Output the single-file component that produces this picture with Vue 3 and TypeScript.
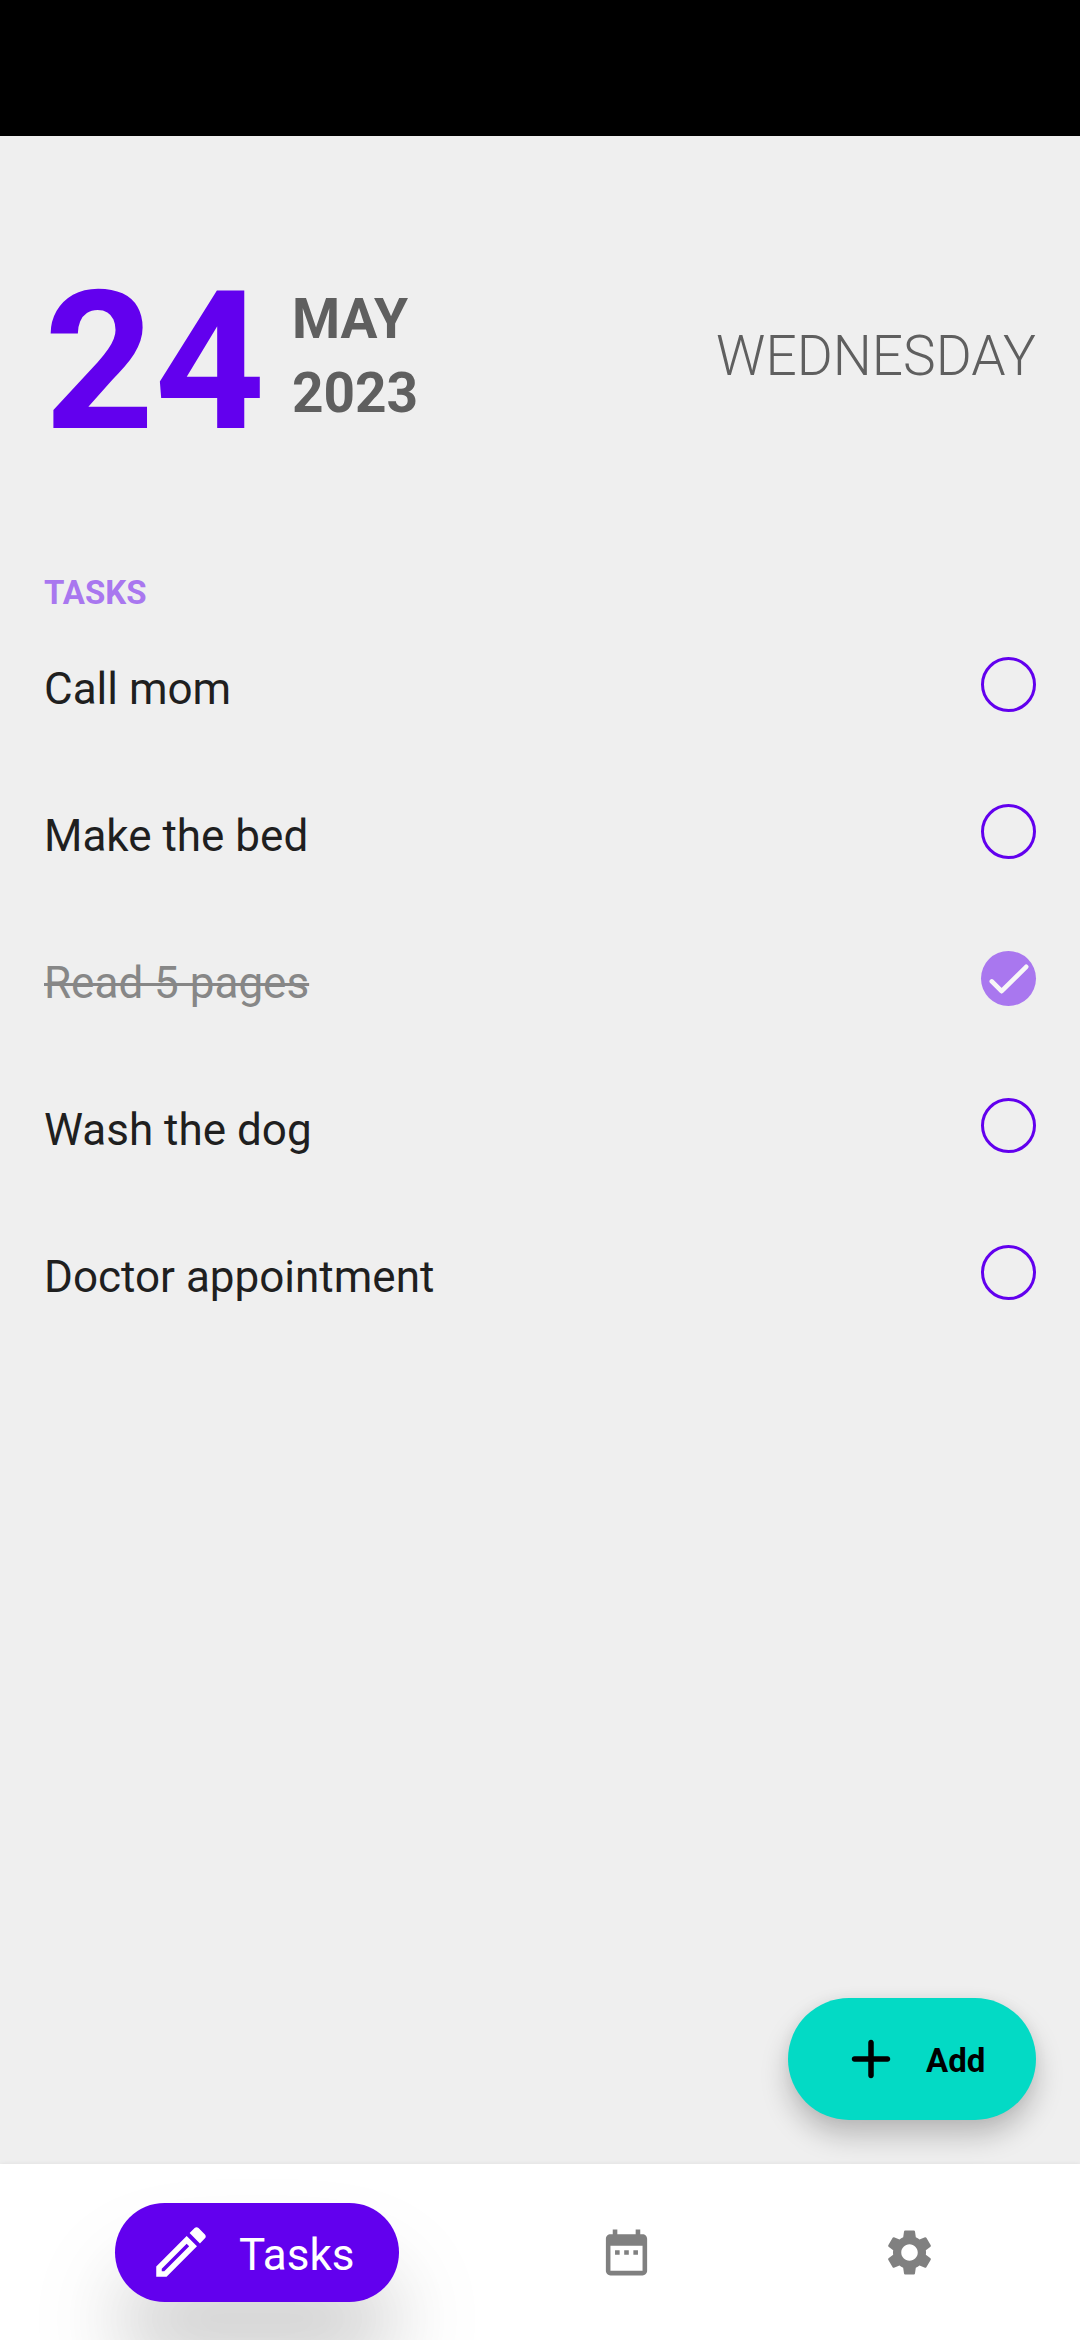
<script setup lang="ts">
import { ref } from 'vue'

interface Task {
  title: string
  done: boolean
}

const tasks = ref<Task[]>([
  { title: 'Call mom', done: false },
  { title: 'Make the bed', done: false },
  { title: 'Read 5 pages', done: true },
  { title: 'Wash the dog', done: false },
  { title: 'Doctor appointment', done: false },
])
</script>

<template>
  <div class="screen">
    <div class="status-bar"></div>
    <main class="content">
      <header class="date">
        <span class="day">24</span>
        <div class="month-year">
          <span>MAY</span>
          <span>2023</span>
        </div>
        <span class="weekday">WEDNESDAY</span>
      </header>

      <h2 class="section">TASKS</h2>
      <ul class="tasks">
        <li v-for="task in tasks" :key="task.title" class="task" :class="{ done: task.done }">
          <span class="title">{{ task.title }}</span>
          <span class="check" @click="task.done = !task.done">
            <svg v-if="task.done" viewBox="0 0 55 55">
              <path d="M10.8 30.4L20.6 40.2L45.2 15.8" />
            </svg>
          </span>
        </li>
      </ul>

      <button class="fab">
        <svg viewBox="0 0 24 24">
          <path d="M18 13h-5v5c0 .55-.45 1-1 1s-1-.45-1-1v-5H6c-.55 0-1-.45-1-1s.45-1 1-1h5V6c0-.55.45-1 1-1s1 .45 1 1v5h5c.55 0 1 .45 1 1s-.45 1-1 1z" />
        </svg>
        <span>Add</span>
      </button>
    </main>

    <nav class="nav">
      <a class="pill">
        <svg viewBox="0 0 24 24">
          <path d="M14.06 9.02l.92.92L5.92 19H5v-.92l9.06-9.06M17.66 3c-.25 0-.51.1-.7.29l-1.83 1.83 3.75 3.75 1.83-1.83c.39-.39.39-1.02 0-1.41l-2.34-2.34c-.2-.2-.45-.29-.71-.29zm-3.6 3.19L3 17.25V21h3.75L17.81 9.94l-3.75-3.75z" />
        </svg>
        <span>Tasks</span>
      </a>
      <a class="tab calendar">
        <svg viewBox="0 0 24 24">
          <path d="M9 11H7v2h2v-2zm4 0h-2v2h2v-2zm4 0h-2v2h2v-2zm2-7h-1V2h-2v2H8V2H6v2H5c-1.11 0-1.99.9-1.99 2L3 20c0 1.1.89 2 2 2h14c1.1 0 2-.9 2-2V6c0-1.1-.9-2-2-2zm0 16H5V9h14v11z" />
        </svg>
      </a>
      <a class="tab settings">
        <svg viewBox="0 0 24 24">
          <path d="M19.14 12.94c.04-.3.06-.61.06-.94 0-.32-.02-.64-.07-.94l2.03-1.58c.18-.14.23-.41.12-.61l-1.92-3.32c-.12-.22-.37-.29-.59-.22l-2.39.96c-.5-.38-1.03-.7-1.62-.94l-.36-2.54c-.04-.24-.24-.41-.48-.41h-3.84c-.24 0-.43.17-.47.41l-.36 2.54c-.59.24-1.13.57-1.62.94l-2.39-.96c-.22-.08-.47 0-.59.22L2.74 8.87c-.12.21-.08.47.12.61l2.03 1.58c-.05.3-.09.63-.09.94s.02.64.07.94l-2.03 1.58c-.18.14-.23.41-.12.61l1.92 3.32c.12.22.37.29.59.22l2.39-.96c.5.38 1.03.7 1.62.94l.36 2.54c.05.24.24.41.48.41h3.84c.24 0 .44-.17.47-.41l.36-2.54c.59-.24 1.13-.56 1.62-.94l2.39.96c.22.08.47 0 .59-.22l1.92-3.32c.12-.22.07-.47-.12-.61l-2.01-1.58zM12 15.6c-1.98 0-3.6-1.62-3.6-3.6s1.62-3.6 3.6-3.6 3.6 1.62 3.6 3.6-1.62 3.6-3.6 3.6z" />
        </svg>
      </a>
    </nav>
  </div>
</template>

<style>
body {
  margin: 0;
  background: #efefef;
}
</style>

<style scoped>
.screen {
  display: flex;
  flex-direction: column;
  width: 1080px;
  height: 2340px;
  overflow: hidden;
  background: #efefef;
  font-family: Roboto, "Noto Sans", sans-serif;
}

.status-bar {
  height: 136px;
  background: #000;
}

.content {
  flex: 1;
  display: flex;
  flex-direction: column;
  padding: 108px 44px 44px;
}

.date {
  display: flex;
  align-items: center;
  height: 232px;
  color: #5f5f5f;
  font-size: 55px;
}

.day {
  padding-top: 4px;
  color: #6200ee;
  font-size: 192.5px;
  font-weight: 700;
  line-height: 228px;
}

.month-year {
  display: flex;
  flex-direction: column;
  margin-left: 27px;
  padding-bottom: 8px;
  font-weight: 700;
  line-height: 74px;
}

.weekday {
  margin-left: auto;
  padding-bottom: 8px;
  font-weight: 300;
  line-height: 64px;
}

.section {
  margin: 97px 0 0;
  color: #a977ef;
  font-size: 33px;
  font-weight: 700;
  line-height: 40px;
}

.tasks {
  margin: 25px 0 0;
  padding: 0;
  list-style: none;
}

.task {
  display: flex;
  justify-content: space-between;
  align-items: center;
  height: 93px;
  margin-bottom: 54px;
}

.title {
  padding-top: 9px;
  color: #1f1f1f;
  font-size: 44px;
  line-height: 52px;
}

.check {
  box-sizing: border-box;
  width: 55px;
  height: 55px;
  border: 3px solid #6200ee;
  border-radius: 50%;
}

.done .title {
  color: #878787;
  text-decoration: line-through;
  text-decoration-thickness: 3px;
}

.done .check {
  border: 0;
  background: #a977ef;
}

.check svg {
  display: block;
  fill: none;
  stroke: #f7f7f7;
  stroke-width: 4.6;
  stroke-linecap: round;
  stroke-linejoin: round;
}

.fab {
  display: flex;
  align-items: center;
  align-self: flex-end;
  box-sizing: border-box;
  width: 248px;
  height: 122px;
  margin-top: auto;
  padding: 0 0 0 50px;
  border: 0;
  border-radius: 61px;
  background: #03dac5;
  color: #000;
  font: 700 33px/40px Roboto, sans-serif;
  box-shadow: 0 16px 28px rgba(0, 0, 0, 0.22), 0 0 14px rgba(0, 0, 0, 0.05);
}

.fab svg {
  width: 66px;
  height: 66px;
}

.fab span {
  margin-left: 22px;
  padding-top: 3px;
}

.nav {
  display: flex;
  align-items: center;
  height: 176px;
  padding-left: 115px;
  background: #fff;
  box-shadow: 0 0 5px rgba(0, 0, 0, 0.07);
}

.pill {
  display: flex;
  align-items: center;
  box-sizing: border-box;
  width: 284px;
  height: 99px;
  padding-left: 33px;
  border-radius: 50px;
  background: #6200ee;
  color: #fff;
  font-size: 44px;
  line-height: 52px;
  box-shadow: 0 66px 70px -10px rgba(0, 0, 0, 0.11), 0 66px 100px 4px rgba(0, 0, 0, 0.1);
}

.pill svg {
  width: 66px;
  height: 66px;
}

.pill span {
  margin-left: 25px;
  padding-top: 6px;
}

.tab svg {
  display: block;
  width: 55px;
  height: 55px;
}

.calendar {
  margin-left: 200px;
}

.settings {
  margin-left: 228px;
}

svg {
  fill: currentColor;
}

.tab {
  color: #808080;
}
</style>
